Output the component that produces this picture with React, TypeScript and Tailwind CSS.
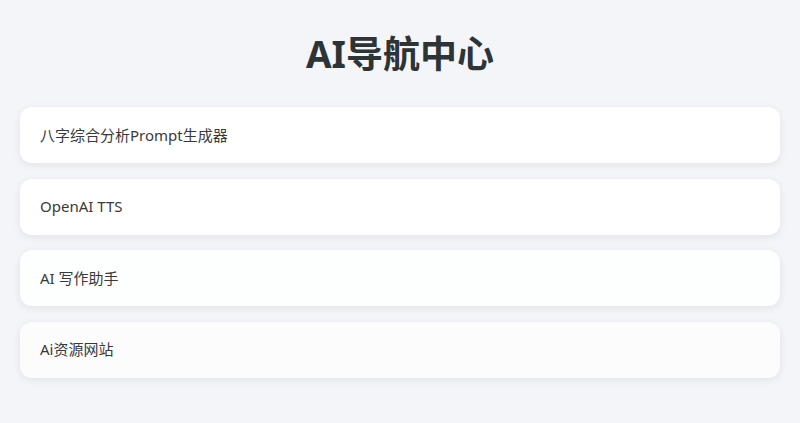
import React from 'react';

const links = [
  { id: 1, title: '八字综合分析Prompt生成器', bg: 'bg-white' },
  { id: 2, title: 'OpenAI TTS', bg: 'bg-white' },
  { id: 3, title: 'AI 写作助手', bg: 'bg-[#fdfefe]' },
  { id: 4, title: 'Ai资源网站', bg: 'bg-[#fcfcfd]' },
];

export default function App() {
  return (
    <div
      className="min-h-screen bg-[#f4f5f9] px-5 pt-[27px] pb-10"
      style={{ fontFamily: '"Segoe UI", "Noto Sans", "Noto Sans CJK SC", sans-serif' }}
    >
      {/* Header */}
      <h1 className="text-center text-[37px] leading-[54px] font-bold text-[#2d3436] mb-[26px]">
        AI导航中心
      </h1>

      {/* Link cards */}
      <div className="flex flex-col gap-[15.5px]">
        {links.map((link) => (
          <a
            key={link.id}
            href="#"
            className={`flex items-center h-14 px-5 rounded-xl ${link.bg} shadow-[0_2px_8px_rgba(0,0,0,0.08)] text-[15px] text-[#3a3a3a]`}
          >
            {link.title}
          </a>
        ))}
      </div>
    </div>
  );
}
